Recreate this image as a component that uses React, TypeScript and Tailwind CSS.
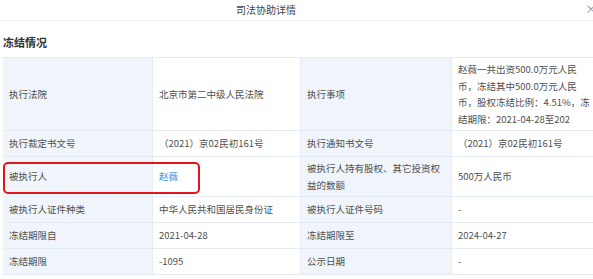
import React from "react";

const font = { fontFamily: '"Noto Sans CJK SC", "Noto Sans", sans-serif' };

type Cell = React.ReactNode;

const rows: [Cell, Cell, Cell, Cell][] = [
  [
    "执行法院",
    "北京市第二中级人民法院",
    "执行事项",
    <>
      赵薇一共出资500.0万元人民
      <br />
      币，冻结其中500.0万元人民
      <br />
      币，股权冻结比例：4.51%，冻
      <br />
      结期限：2021-04-28至202
    </>,
  ],
  ["执行裁定书文号", "（2021）京02民初161号", "执行通知书文号", "（2021）京02民初161号"],
  [
    "被执行人",
    <span className="text-[#3b8ee0]">赵薇</span>,
    <>
      被执行人持有股权、其它投资权
      <br />
      益的数额
    </>,
    "500万人民币",
  ],
  ["被执行人证件种类", "中华人民共和国居民身份证", "被执行人证件号码", "-"],
  ["冻结期限自", "2021-04-28", "冻结期限至", "2024-04-27"],
  ["冻结期限", "-1095", "公示日期", "-"],
];

function Label({ children }: { children: React.ReactNode }) {
  return (
    <div className="flex items-center px-[6px] py-[3px] min-h-[26px] bg-[#eff5fa] border-b border-r border-[#e4ebf2] whitespace-nowrap">
      {children}
    </div>
  );
}

function Value({ children }: { children: React.ReactNode }) {
  return (
    <div className="flex items-center px-[6px] py-[3px] min-h-[26px] bg-white border-b border-r border-[#e4ebf2] whitespace-nowrap">
      {children}
    </div>
  );
}

export default function App() {
  return (
    <div
      className="relative w-[593px] h-[279px] overflow-hidden bg-white text-[#505050] text-[9.5px] leading-[16.5px]"
      style={font}
    >
      <div className="relative h-[21px] border-b border-[#eef0f2] flex items-center">
        <div className="w-[532px] text-center text-[10px] text-[#444]">司法协助详情</div>
        <span className="absolute right-[-4px] top-[1px] text-[12px] text-[#999]">×</span>
      </div>
      <div className="pl-[3px] pt-[13px] pb-[6px] text-[11px] font-bold text-[#333] leading-[17px]">
        冻结情况
      </div>
      <div className="ml-[3px] w-[610px] border-t border-[#e4ebf2]">
        {rows.map((r, i) => (
          <div key={i} className="grid grid-cols-[150px_148px_151px_161px]">
            <Label>{r[0]}</Label>
            <Value>{r[1]}</Value>
            <Label>{r[2]}</Label>
            <Value>{r[3]}</Value>
          </div>
        ))}
      </div>
      <div className="absolute left-[3px] top-[162px] w-[197px] h-[32px] border-2 border-[#e3151a] rounded-[5px]" />
    </div>
  );
}
